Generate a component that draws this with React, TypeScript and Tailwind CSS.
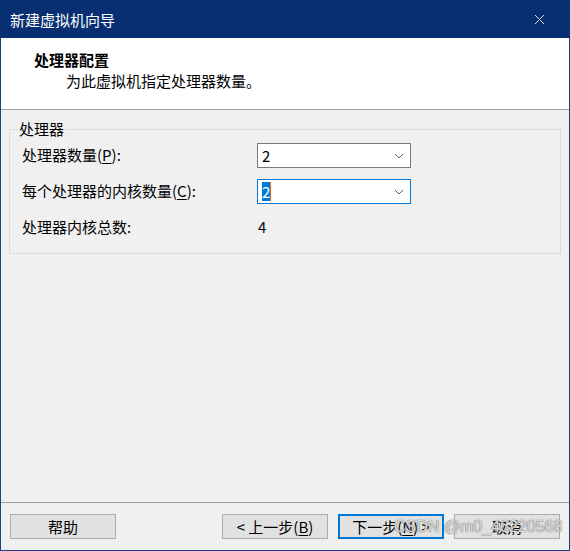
import { X } from 'lucide-react';

const font = '[font-family:"Noto_Sans_CJK_SC","Noto_Sans",sans-serif]';

function Chevron() {
    return (
        <svg width="10" height="6" viewBox="0 0 10 6" className="shrink-0">
            <path d="M1 1 L5 5 L9 1" fill="none" stroke="#606060" strokeWidth="1" />
        </svg>
    );
}

function Combo({ focused, value }: { focused?: boolean; value: string }) {
    return (
        <div
            className={`flex h-[25px] w-[154px] items-center justify-between bg-white pl-[4px] pr-[6px] ${
                focused ? 'border border-[#0078d7]' : 'border border-[#7a7a7a]'
            }`}
        >
            {focused ? (
                <span className="flex items-center">
                    <span className="bg-[#0078d7] leading-[19px] text-white">{value}</span>
                    <span className="h-[19px] w-[1px] bg-[#e07020]" />
                </span>
            ) : (
                <span className="leading-[19px]">{value}</span>
            )}
            <Chevron />
        </div>
    );
}

function Btn({ children, primary }: { children: React.ReactNode; primary?: boolean }) {
    return (
        <button
            className={`flex h-[25px] w-[106px] items-center justify-center bg-[#e1e1e1] text-[15px] leading-none text-black ${
                primary ? 'border-2 border-[#0078d7]' : 'border border-[#adadad]'
            }`}
        >
            {children}
        </button>
    );
}

export default function App() {
    return (
        <div className={`relative flex h-[551px] w-[570px] flex-col bg-[#f0f0f0] text-[15px] text-black ${font}`}>
            {/* title bar */}
            <div className="flex h-[38px] shrink-0 items-center justify-between bg-[#072f72] pl-[10px] pr-[22px] text-white">
                <span className="leading-none">新建虚拟机向导</span>
                <X className="h-[17px] w-[17px]" strokeWidth={1.2} />
            </div>

            <div className="flex flex-1 flex-col border-x border-b border-[#1e4185]">
                {/* header */}
                <div className="h-[72px] shrink-0 border-b border-[#a0a0a0] bg-white pl-[33px] pt-[12px]">
                    <div className="font-bold leading-[20px]">处理器配置</div>
                    <div className="pl-[32px] leading-[22px]">为此虚拟机指定处理器数量。</div>
                </div>

                {/* body */}
                <div className="flex-1 pt-[19px]">
                    <div className="relative mx-[8px] h-[125px] border border-[#dcdcdc]">
                        <span className="absolute left-[8px] top-[-11px] bg-[#f0f0f0] px-[1px] leading-[20px]">处理器</span>
                        <div className="flex flex-col pl-[12px] pt-[13px]">
                            <div className="flex h-[25px] items-center">
                                <span className="w-[235px]">
                                    处理器数量(<span className="underline underline-offset-2">P</span>):
                                </span>
                                <Combo value="2" />
                            </div>
                            <div className="mt-[11px] flex h-[25px] items-center">
                                <span className="w-[235px]">
                                    每个处理器的内核数量(<span className="underline underline-offset-2">C</span>):
                                </span>
                                <Combo value="2" focused />
                            </div>
                            <div className="mt-[11px] flex h-[25px] items-center">
                                <span className="w-[236px]">处理器内核总数:</span>
                                <span>4</span>
                            </div>
                        </div>
                    </div>
                </div>

                {/* footer */}
                <div className="flex h-[48px] shrink-0 items-start border-t border-[#a0a0a0] px-[9px] pt-[11px]">
                    <Btn>帮助</Btn>
                    <div className="flex-1" />
                    <div className="flex gap-[10px]">
                        <Btn>
                            &lt; 上一步(<span className="underline underline-offset-2">B</span>)
                        </Btn>
                        <Btn primary>
                            下一步(<span className="underline underline-offset-2">N</span>) &gt;
                        </Btn>
                        <Btn>取消</Btn>
                    </div>
                </div>
            </div>

            {/* watermark */}
            <span className="pointer-events-none absolute left-[394px] top-[516px] z-10 whitespace-nowrap text-[16px] leading-[22px] text-[rgba(255,255,255,0.75)] [text-shadow:0_0_1px_#6a6a6a,0_0_1px_#6a6a6a] [font-family:'Liberation_Sans',sans-serif]">
                CSDN @m0_46220568
            </span>
        </div>
    );
}
